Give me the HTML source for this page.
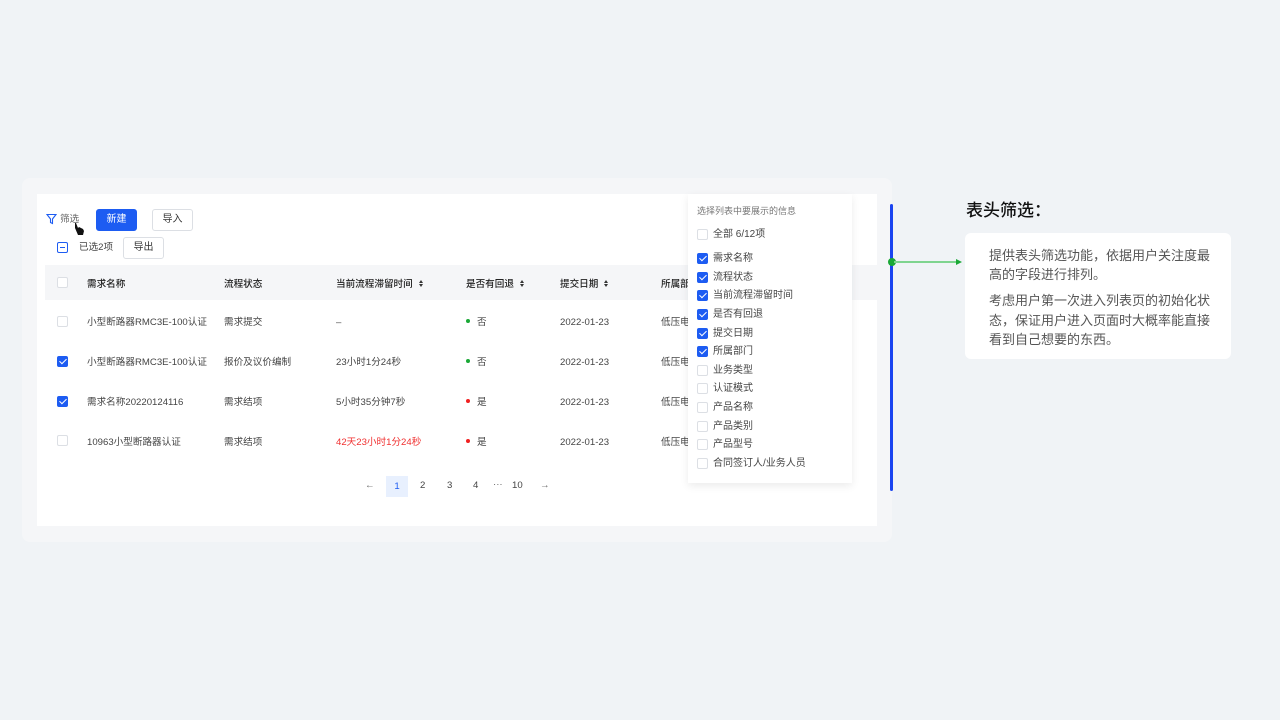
<!DOCTYPE html>
<html><head><meta charset="utf-8"><style>
*{margin:0;padding:0;box-sizing:border-box}
body{width:1280px;height:720px;background:#f0f3f6;position:relative;overflow:hidden;font-family:"Liberation Sans","Noto Sans CJK SC",sans-serif;color:#444;font-size:9.6px;line-height:30px}
.a{position:absolute;white-space:nowrap}
.cb{position:absolute;width:11px;height:11px;border:1px solid #dcdfe4;border-radius:2px;background:#fff}
.ck{background:#1d5cf2;border-color:#1d5cf2}
.ck::after{content:"";position:absolute;left:3px;top:0px;width:3px;height:6px;border:solid #fff;border-width:0 1.3px 1.3px 0;transform:rotate(45deg)}
.btn{position:absolute;height:22px;border:1px solid #dcdfe4;border-radius:3px;background:#fff;font-size:10px;text-align:center;line-height:20px;color:#333}
.th{font-weight:500;color:#222}
.srt{display:inline-block;margin-left:6px;width:5px;height:8px;position:relative;vertical-align:-1px}
.srt::before{content:"";position:absolute;left:0;top:0;border-left:2.5px solid transparent;border-right:2.5px solid transparent;border-bottom:3px solid #333}
.srt::after{content:"";position:absolute;left:0;top:4px;border-left:2.5px solid transparent;border-right:2.5px solid transparent;border-top:3px solid #333}
.dot{display:inline-block;width:4px;height:4px;border-radius:50%;margin-right:7px;vertical-align:2px}
.dd{font-size:10px;color:#444}
</style></head><body>
<div class="a" style="left:22px;top:178px;width:870px;height:364px;background:#f5f6f8;border-radius:8px"></div>
<div class="a" style="left:37px;top:194px;width:840px;height:332px;background:#fff"></div>

<svg class="a" style="left:46px;top:213px" width="11" height="12" viewBox="0 0 11 12"><path d="M1 1.5h9L6.5 6v4.5L4.5 9.5V6z" fill="none" stroke="#1d5cf2" stroke-width="1.1"/></svg>
<div class="a" style="left:60px;top:205px;color:#666">筛选</div>
<svg class="a" style="left:73px;top:222px" width="13" height="14" viewBox="0 0 13 14"><path d="M2 1l1 0 2 5 1-1 2 1 2 1 1 2-1 4H5L2 6z" fill="#111"/></svg>
<div class="btn" style="left:96px;top:209px;width:41px;background:#1d5cf2;border-color:#1d5cf2;color:#fff">新建</div>
<div class="btn" style="left:152px;top:209px;width:41px">导入</div>
<div class="cb" style="left:57px;top:242px;border-color:#1d5cf2"><div style="position:absolute;left:2px;top:4px;width:5px;height:1.3px;background:#1d5cf2"></div></div>
<div class="a" style="left:79px;top:233px;color:#444">已选2项</div>
<div class="btn" style="left:123px;top:237px;width:41px">导出</div>

<div class="a" style="left:45px;top:265px;width:832px;height:35px;background:#f5f6f8"></div>
<div class="cb" style="left:57px;top:277px"></div>
<div class="a th" style="left:87px;top:270px">需求名称</div>
<div class="a th" style="left:224px;top:270px">流程状态</div>
<div class="a th" style="left:336px;top:270px">当前流程滞留时间<span class="srt"></span></div>
<div class="a th" style="left:466px;top:270px">是否有回退<span class="srt"></span></div>
<div class="a th" style="left:560px;top:270px">提交日期<span class="srt"></span></div>
<div class="a th" style="left:661px;top:270px">所属部</div>

<div class="cb" style="left:57px;top:316px"></div>
<div class="a" style="left:87px;top:308px">小型断路器RMC3E-100认证</div>
<div class="a" style="left:224px;top:308px">需求提交</div>
<div class="a" style="left:336px;top:308px">–</div>
<div class="a" style="left:466px;top:308px"><span class="dot" style="background:#1aa836"></span>否</div>
<div class="a" style="left:560px;top:308px">2022-01-23</div>
<div class="a" style="left:661px;top:308px">低压电</div>

<div class="cb ck" style="left:57px;top:356px"></div>
<div class="a" style="left:87px;top:348px">小型断路器RMC3E-100认证</div>
<div class="a" style="left:224px;top:348px">报价及议价编制</div>
<div class="a" style="left:336px;top:348px">23小时1分24秒</div>
<div class="a" style="left:466px;top:348px"><span class="dot" style="background:#1aa836"></span>否</div>
<div class="a" style="left:560px;top:348px">2022-01-23</div>
<div class="a" style="left:661px;top:348px">低压电</div>

<div class="cb ck" style="left:57px;top:396px"></div>
<div class="a" style="left:87px;top:388px">需求名称20220124116</div>
<div class="a" style="left:224px;top:388px">需求结项</div>
<div class="a" style="left:336px;top:388px">5小时35分钟7秒</div>
<div class="a" style="left:466px;top:388px"><span class="dot" style="background:#f02020"></span>是</div>
<div class="a" style="left:560px;top:388px">2022-01-23</div>
<div class="a" style="left:661px;top:388px">低压电</div>

<div class="cb" style="left:57px;top:435px"></div>
<div class="a" style="left:87px;top:428px">10963小型断路器认证</div>
<div class="a" style="left:224px;top:428px">需求结项</div>
<div class="a" style="left:336px;top:428px;color:#f03030">42天23小时1分24秒</div>
<div class="a" style="left:466px;top:428px"><span class="dot" style="background:#f02020"></span>是</div>
<div class="a" style="left:560px;top:428px">2022-01-23</div>
<div class="a" style="left:661px;top:428px">低压电</div>

<div class="a" style="left:365px;top:471px;color:#666">←</div>
<div class="a" style="left:386px;top:476px;width:22px;height:21px;background:#e8f0fe;color:#1d5cf2;text-align:center;line-height:21px">1</div>
<div class="a" style="left:420px;top:471px">2</div>
<div class="a" style="left:447px;top:471px">3</div>
<div class="a" style="left:473px;top:471px">4</div>
<div class="a" style="left:493px;top:470px;color:#666">···</div>
<div class="a" style="left:512px;top:471px">10</div>
<div class="a" style="left:540px;top:471px;color:#666">→</div>

<div class="a" style="left:688px;top:194px;width:164px;height:289px;background:#fff;box-shadow:0 3px 8px rgba(0,0,0,0.08)"></div>
<div class="a" style="left:697px;top:196px;font-size:9px;color:#777">选择列表中要展示的信息</div>
<div class="cb" style="left:697px;top:229px"></div><div class="a dd" style="left:713px;top:220px">全部 6/12项</div>
<div class="cb ck" style="left:697px;top:253px"></div><div class="a dd" style="left:713px;top:244px">需求名称</div>
<div class="cb ck" style="left:697px;top:272px"></div><div class="a dd" style="left:713px;top:263px">流程状态</div>
<div class="cb ck" style="left:697px;top:290px"></div><div class="a dd" style="left:713px;top:281px">当前流程滞留时间</div>
<div class="cb ck" style="left:697px;top:309px"></div><div class="a dd" style="left:713px;top:300px">是否有回退</div>
<div class="cb ck" style="left:697px;top:328px"></div><div class="a dd" style="left:713px;top:319px">提交日期</div>
<div class="cb ck" style="left:697px;top:346px"></div><div class="a dd" style="left:713px;top:337px">所属部门</div>
<div class="cb" style="left:697px;top:365px"></div><div class="a dd" style="left:713px;top:356px">业务类型</div>
<div class="cb" style="left:697px;top:383px"></div><div class="a dd" style="left:713px;top:374px">认证模式</div>
<div class="cb" style="left:697px;top:402px"></div><div class="a dd" style="left:713px;top:393px">产品名称</div>
<div class="cb" style="left:697px;top:421px"></div><div class="a dd" style="left:713px;top:412px">产品类别</div>
<div class="cb" style="left:697px;top:439px"></div><div class="a dd" style="left:713px;top:430px">产品型号</div>
<div class="cb" style="left:697px;top:458px"></div><div class="a dd" style="left:713px;top:449px">合同签订人/业务人员</div>

<div class="a" style="left:890px;top:204px;width:3px;height:287px;background:#1a44f0;border-radius:2px"></div>
<div class="a" style="left:888px;top:258px;width:8px;height:8px;border-radius:50%;background:#1aa836"></div>
<div class="a" style="left:894px;top:261px;width:64px;height:2px;background:#7fd48f"></div>
<div class="a" style="left:956px;top:259px;width:0;height:0;border-left:6px solid #1aa836;border-top:3px solid transparent;border-bottom:3px solid transparent"></div>

<div class="a" style="left:966px;top:200px;font-size:17px;line-height:22px;color:#111;font-weight:500">表头筛选：</div>
<div class="a" style="left:965px;top:233px;width:266px;height:126px;background:#fff;border-radius:6px"></div>
<div class="a" style="left:989px;top:246px;font-size:13px;line-height:19px;color:#555;white-space:normal;width:230px">提供表头筛选功能，依据用户关注度最高的字段进行排列。</div>
<div class="a" style="left:989px;top:291px;font-size:13px;line-height:19.5px;color:#555;white-space:normal;width:230px">考虑用户第一次进入列表页的初始化状态，保证用户进入页面时大概率能直接看到自己想要的东西。</div>
</body></html>
